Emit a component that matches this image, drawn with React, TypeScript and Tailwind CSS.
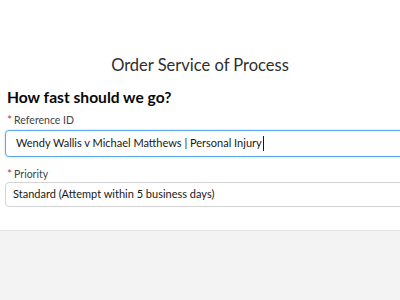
export default function App() {
  return (
    <div className="h-[300px] w-[400px] overflow-hidden bg-[#f3f3f3] font-['Lato',sans-serif] text-[#181818]">
      <div className="h-[231px] border-b border-[#e5e5e5] bg-white">
        <h1 className="pt-[53px] text-center text-[16.5px] leading-[24px] text-[#2e2e2e]">
          Order Service of Process
        </h1>
        <h2 className="mt-[10px] pl-[7px] text-[15.6px] font-bold leading-[20px] text-[#080707]">
          How fast should we go?
        </h2>
        <div className="w-[420px] pl-[5px]">
          <div className="mt-[5px] pl-[2px] text-[10.5px] leading-[16px] text-[#444]">
            <span className="mr-[2px] text-[12px] text-[#c23934]">*</span>Reference ID
          </div>
          <div className="mt-[2px] flex h-[27px] items-center rounded-[4px] border border-[#5fa8e8] pl-[10px] text-[11px] text-[#181818] shadow-[0_0_2px_#9ccaf0]">
            Wendy Wallis v Michael Matthews | Personal Injury
            <span className="ml-[1px] h-[15px] w-px bg-[#181818]" />
          </div>
          <div className="mt-[9px] pl-[2px] text-[10.5px] leading-[16px] text-[#444]">
            <span className="mr-[2px] text-[12px] text-[#c23934]">*</span>Priority
          </div>
          <div className="mt-0 flex h-[25px] items-center rounded-[4px] border border-[#d4d4d4] pl-[7px] text-[11px] text-[#181818]">
            Standard (Attempt within 5 business days)
          </div>
        </div>
      </div>
    </div>
  )
}
